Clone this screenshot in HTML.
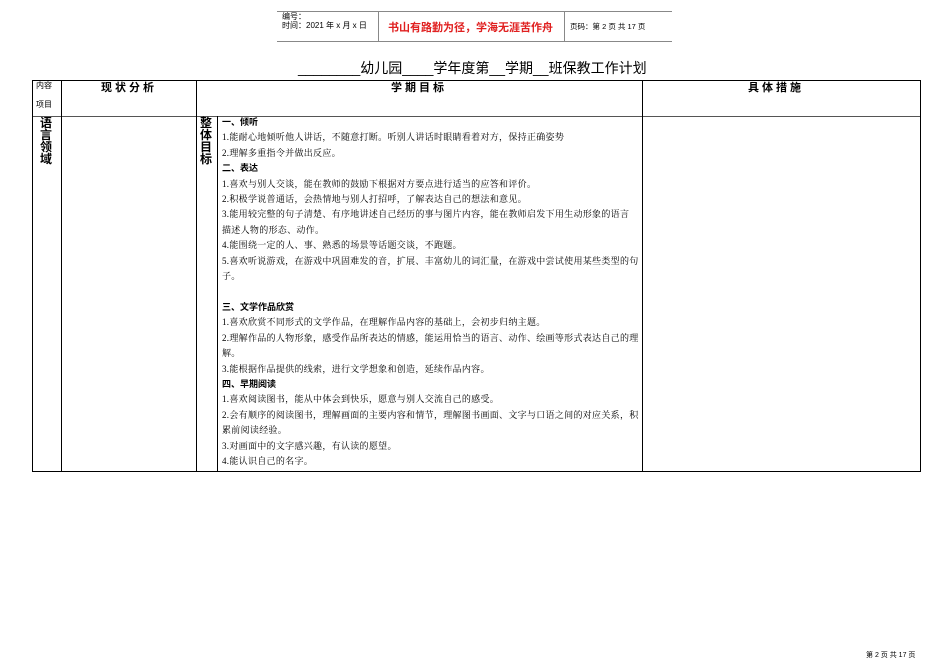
<!DOCTYPE html>
<html><head><meta charset="utf-8"><style>
body{margin:0;width:950px;height:672px;background:#fff;position:relative;overflow:hidden;font-family:"Liberation Serif","Noto Serif CJK SC","Noto Sans CJK SC",serif;color:#000}
.a{position:absolute;white-space:nowrap}
.h{position:absolute;background:#000}
.s{font-family:"Liberation Sans","Noto Sans CJK SC",sans-serif}
.t{left:222px;font-size:9px;line-height:15.4px;position:absolute;top:115px;white-space:nowrap;letter-spacing:0.3px}
.t b{font-family:"Liberation Sans","Noto Sans CJK SC",sans-serif;letter-spacing:0}
</style></head><body>
<div class="h" style="left:277px;top:11px;width:395px;height:1px;background:#888"></div>
<div class="h" style="left:277px;top:41px;width:395px;height:1px;background:#888"></div>
<div class="h" style="left:378px;top:11px;width:1px;height:31px;background:#888"></div>
<div class="h" style="left:564px;top:11px;width:1px;height:31px;background:#888"></div>
<div class="a s" style="left:282px;top:12px;font-size:8px;line-height:9px">编号：<br>时间：2021 年 x 月 x 日</div>
<div class="a s" style="left:388px;top:19px;font-size:11px;color:#e02020;font-weight:bold">书山有路勤为径，学海无涯苦作舟</div>
<div class="a s" style="left:570px;top:21px;font-size:7.5px">页码：第 2 页 共 17 页</div>
<div class="a s" style="left:298px;top:58px;font-size:14px">________幼儿园____学年度第__学期__班保教工作计划</div>
<div class="h" style="left:32px;top:80px;width:889px;height:1px"></div>
<div class="h" style="left:32px;top:116px;width:889px;height:1px;background:#555"></div>
<div class="h" style="left:32px;top:471px;width:889px;height:1px"></div>
<div class="h" style="left:32px;top:80px;width:1px;height:392px"></div>
<div class="h" style="left:61px;top:80px;width:1px;height:392px"></div>
<div class="h" style="left:196px;top:80px;width:1px;height:392px"></div>
<div class="h" style="left:217px;top:116px;width:1px;height:356px"></div>
<div class="h" style="left:642px;top:80px;width:1px;height:392px"></div>
<div class="h" style="left:920px;top:80px;width:1px;height:392px"></div>
<div class="a s" style="left:36px;top:76px;font-size:8px;line-height:19px">内容<br>项目</div>
<div class="a s" style="left:101px;top:79px;font-size:11px;letter-spacing:3px;font-weight:bold">现状分析</div>
<div class="a s" style="left:391px;top:79px;font-size:11px;letter-spacing:3px;font-weight:bold">学期目标</div>
<div class="a s" style="left:748px;top:79px;font-size:11px;letter-spacing:3px;font-weight:bold">具体措施</div>
<div class="a s" style="left:40px;top:117px;font-size:12px;line-height:12px;width:13px;white-space:normal;font-weight:bold">语言领域</div>
<div class="a s" style="left:200px;top:117px;font-size:12px;line-height:12px;width:13px;white-space:normal;font-weight:bold">整体目标</div>
<div class="t">
<b>一、倾听</b><br>
1.能耐心地倾听他人讲话，不随意打断。听别人讲话时眼睛看着对方，保持正确姿势<br>
2.理解多重指令并做出反应。<br>
<b>二、表达</b><br>
1.喜欢与别人交谈，能在教师的鼓励下根据对方要点进行适当的应答和评价。<br>
2.积极学说普通话，会热情地与别人打招呼，了解表达自己的想法和意见。<br>
3.能用较完整的句子清楚、有序地讲述自己经历的事与图片内容，能在教师启发下用生动形象的语言<br>描述人物的形态、动作。<br>
4.能围绕一定的人、事、熟悉的场景等话题交谈，不跑题。<br>
5.喜欢听说游戏，在游戏中巩固难发的音，扩展、丰富幼儿的词汇量，在游戏中尝试使用某些类型的句<br>子。<br><br>
<b>三、文学作品欣赏</b><br>
1.喜欢欣赏不同形式的文学作品，在理解作品内容的基础上，会初步归纳主题。<br>
2.理解作品的人物形象，感受作品所表达的情感，能运用恰当的语言、动作、绘画等形式表达自己的理<br>解。<br>
3.能根据作品提供的线索，进行文学想象和创造，延续作品内容。<br>
<b>四、早期阅读</b><br>
1.喜欢阅读图书，能从中体会到快乐，愿意与别人交流自己的感受。<br>
2.会有顺序的阅读图书，理解画面的主要内容和情节，理解图书画面、文字与口语之间的对应关系，积<br>累前阅读经验。<br>
3.对画面中的文字感兴趣，有认读的愿望。<br>
4.能认识自己的名字。
</div>
<div class="a s" style="left:866px;top:650px;font-size:7px">第 2 页 共 17 页</div>
</body></html>
